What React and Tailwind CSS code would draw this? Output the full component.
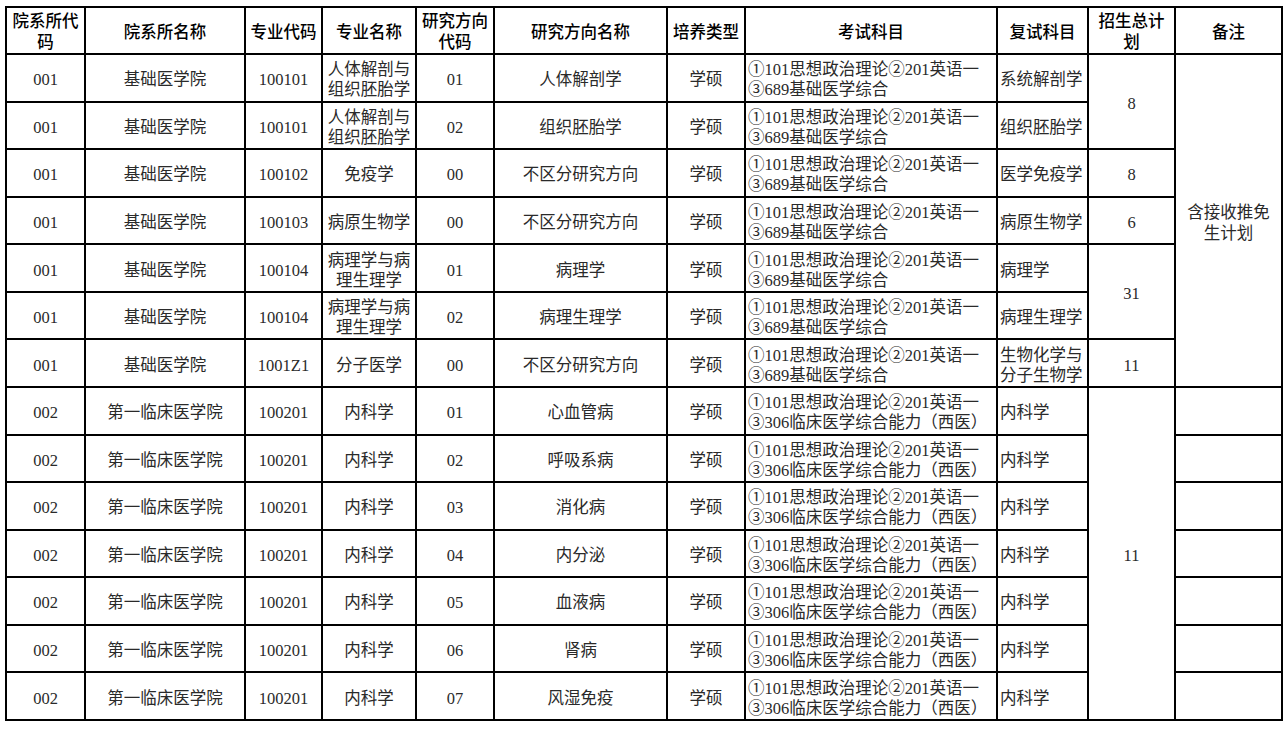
import React from 'react';

const FONT = '"Liberation Serif", "Noto Sans CJK SC", serif';

const EXAM_A = ['①101思想政治理论②201英语一', '③689基础医学综合'];
const EXAM_B = ['①101思想政治理论②201英语一', '③306临床医学综合能力（西医）'];

// 每行: 院系所代码, 名称, 专业代码, 专业名称, 方向代码, 方向名称, 类型, 考试科目, 复试科目
const rows = [
  ['001', '基础医学院', '100101', '人体解剖与组织胚胎学', '01', '人体解剖学', '学硕', EXAM_A, '系统解剖学'],
  ['001', '基础医学院', '100101', '人体解剖与组织胚胎学', '02', '组织胚胎学', '学硕', EXAM_A, '组织胚胎学'],
  ['001', '基础医学院', '100102', '免疫学', '00', '不区分研究方向', '学硕', EXAM_A, '医学免疫学'],
  ['001', '基础医学院', '100103', '病原生物学', '00', '不区分研究方向', '学硕', EXAM_A, '病原生物学'],
  ['001', '基础医学院', '100104', '病理学与病理生理学', '01', '病理学', '学硕', EXAM_A, '病理学'],
  ['001', '基础医学院', '100104', '病理学与病理生理学', '02', '病理生理学', '学硕', EXAM_A, '病理生理学'],
  ['001', '基础医学院', '1001Z1', '分子医学', '00', '不区分研究方向', '学硕', EXAM_A, '生物化学与分子生物学'],
  ['002', '第一临床医学院', '100201', '内科学', '01', '心血管病', '学硕', EXAM_B, '内科学'],
  ['002', '第一临床医学院', '100201', '内科学', '02', '呼吸系病', '学硕', EXAM_B, '内科学'],
  ['002', '第一临床医学院', '100201', '内科学', '03', '消化病', '学硕', EXAM_B, '内科学'],
  ['002', '第一临床医学院', '100201', '内科学', '04', '内分泌', '学硕', EXAM_B, '内科学'],
  ['002', '第一临床医学院', '100201', '内科学', '05', '血液病', '学硕', EXAM_B, '内科学'],
  ['002', '第一临床医学院', '100201', '内科学', '06', '肾病', '学硕', EXAM_B, '内科学'],
  ['002', '第一临床医学院', '100201', '内科学', '07', '风湿免疫', '学硕', EXAM_B, '内科学'],
];

// 招生总计划 合并单元格
const plan = { 0: ['8', 2], 2: ['8', 1], 3: ['6', 1], 4: ['31', 2], 6: ['11', 1], 7: ['11', 7] };

const headers = ['院系所代码', '院系所名称', '专业代码', '专业名称', '研究方向代码', '研究方向名称', '培养类型', '考试科目', '复试科目', '招生总计划', '备注'];
const widths = ['w-[79px]', 'w-[160px]', 'w-[77px]', 'w-[94px]', 'w-[78px]', 'w-[173px]', 'w-[78px]', 'w-[252px]', 'w-[91px]', 'w-[87px]', 'w-[107px]'];

const td = 'border-2 border-black text-center align-middle px-[3px] pt-[5px] pb-0 leading-[20px]';

export default function App() {
  return (
    <div className="bg-white w-[1288px] h-[730px] overflow-hidden pl-[5px] pt-[6px]" style={{ fontFamily: FONT }}>
      <table className="border-collapse table-fixed w-[1277px] text-[16.5px] text-[#2a2a2a]">
        <colgroup>
          {widths.map((w, i) => <col key={i} className={w} />)}
        </colgroup>
        <thead>
          <tr className="h-[47px]">
            {headers.map(h => (
              <th key={h} className="border-2 border-black text-center align-middle font-medium text-black px-[3px] pt-[3px] pb-0 leading-[21px]">{h}</th>
            ))}
          </tr>
        </thead>
        <tbody>
          {rows.map((r, i) => (
            <tr key={i} className="h-[47.57px]">
              <td className={td}>{r[0]}</td>
              <td className={td}>{r[1]}</td>
              <td className={td}>{r[2]}</td>
              <td className={td}>{r[3]}</td>
              <td className={td}>{r[4]}</td>
              <td className={td}>{r[5]}</td>
              <td className={td}>{r[6]}</td>
              <td className="border-2 border-black text-left align-middle px-[2px] pt-[5px] pb-0 leading-[20px] whitespace-nowrap">
                {r[7][0]}<br />{r[7][1]}
              </td>
              <td className="border-2 border-black text-left align-middle px-[2px] pt-[5px] pb-0 leading-[20px]">{r[8]}</td>
              {plan[i] && <td rowSpan={plan[i][1]} className={td}>{plan[i][0]}</td>}
              {i === 0 && <td rowSpan={7} className="border-2 border-black text-center align-middle px-[8px] pt-[5px] pb-0 leading-[21px]">含接收推免生计划</td>}
              {i >= 7 && <td className={td}></td>}
            </tr>
          ))}
        </tbody>
      </table>
    </div>
  );
}
